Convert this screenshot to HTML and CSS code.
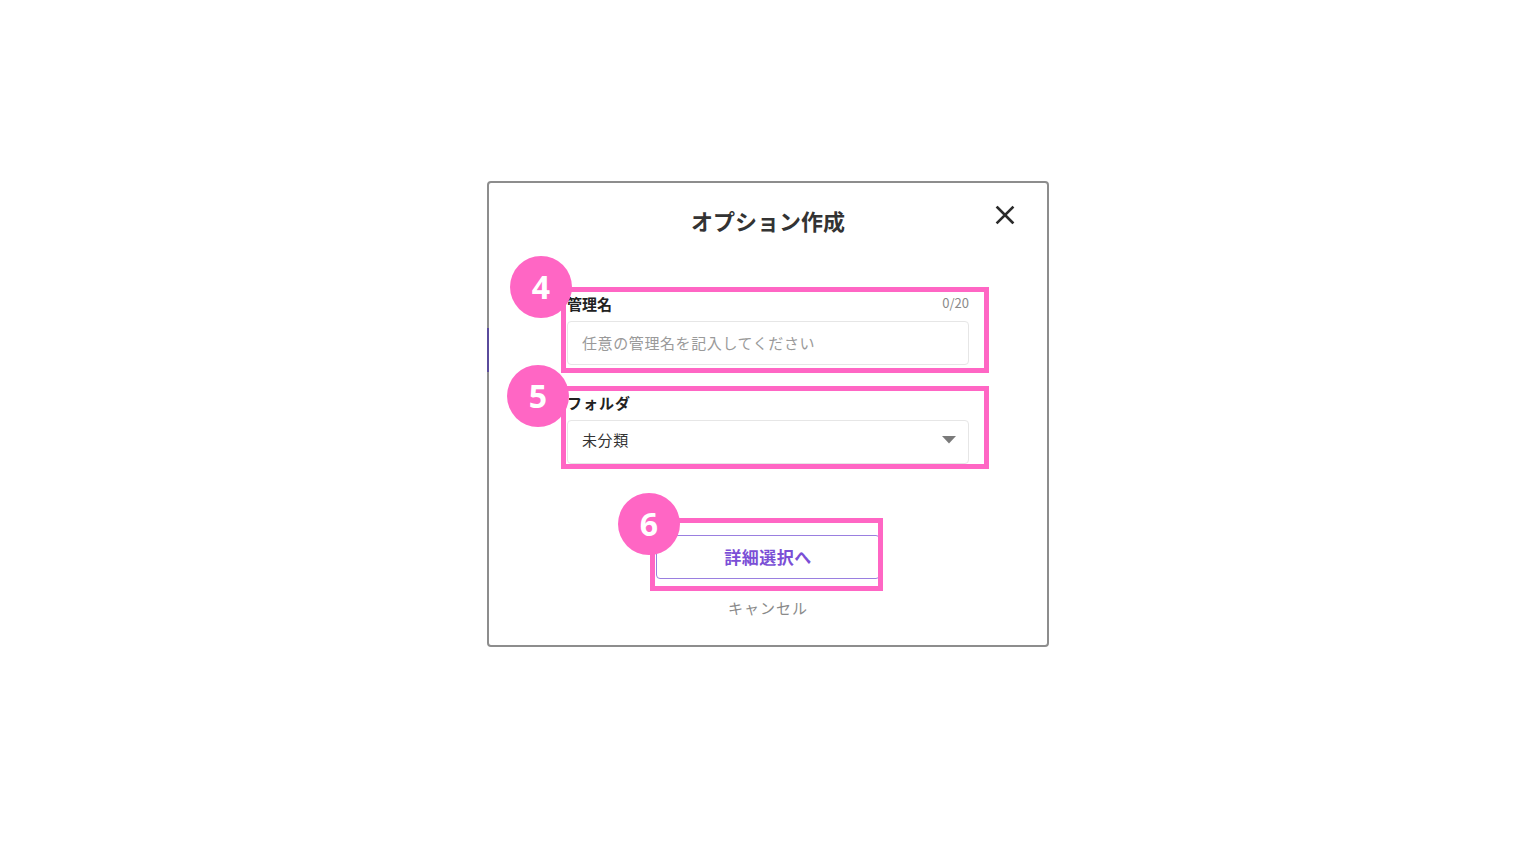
FILE: index.html
```html
<html lang="ja">
<head>
    <meta charset="UTF-8">
    <meta name="viewport" content="width=device-width, initial-scale=1.0">
    <title>オプション作成</title>
    <link rel="stylesheet" href="styles.css">
</head>
<body>
    <div class="page">
        <div class="modal">
            <div class="edge-mark"></div>
            <div class="modal-header">
                <h2>オプション作成</h2>
                <button class="close-btn" aria-label="閉じる">
                    <svg width="20" height="20" viewBox="0 0 20 20">
                        <path d="M2.5 2.5 L17.5 17.5 M17.5 2.5 L2.5 17.5" stroke="#2b2b2b" stroke-width="2.6" stroke-linecap="square" fill="none"/>
                    </svg>
                </button>
            </div>

            <div class="field field-name">
                <div class="field-label">
                    <span>管理名</span>
                    <span class="counter">0/20</span>
                </div>
                <input class="text-input" type="text" placeholder="任意の管理名を記入してください">
            </div>

            <div class="field field-folder">
                <div class="field-label">
                    <span>フォルダ</span>
                </div>
                <div class="select-box">
                    <span>未分類</span>
                    <svg width="14" height="8" viewBox="0 0 14 8">
                        <path d="M0 0 H14 L7 7.5 Z" fill="#7a7a7a"/>
                    </svg>
                </div>
            </div>

            <div class="actions">
                <button class="next-btn">詳細選択へ</button>
                <div class="cancel">キャンセル</div>
            </div>

            <!-- annotation overlay -->
            <div class="mark-box box-1"></div>
            <div class="mark-box box-2"></div>
            <div class="mark-box box-3"></div>
            <div class="mark-num num-4">4</div>
            <div class="mark-num num-5">5</div>
            <div class="mark-num num-6">6</div>
        </div>
    </div>
</body>
</html>
```

FILE: styles.css
```css
body {
    margin: 0;
    padding: 0;
    background: #ffffff;
    font-family: "Noto Sans CJK JP", "Noto Sans", sans-serif;
    color: #333333;
}
.page {
    display: flex;
    justify-content: center;
    padding-top: 181px;
}
.modal {
    position: relative;
    box-sizing: border-box;
    width: 562px;
    height: 466px;
    border: 2px solid #8d8d8d;
    border-radius: 4px;
    background: #ffffff;
    padding: 22px 78px 0 78px;
}
.edge-mark {
    position: absolute;
    left: -2px;
    top: 145px;
    width: 2px;
    height: 44px;
    background: #5a4b9c;
}
.modal-header {
    position: relative;
    display: flex;
    justify-content: center;
}
.modal-header h2 {
    margin: 0;
    font-size: 22px;
    line-height: 30px;
    font-weight: 700;
    color: #333333;
}
.close-btn {
    position: absolute;
    right: -46px;
    top: 0;
    background: none;
    border: none;
    padding: 0;
    width: 20px;
    height: 20px;
    cursor: pointer;
}
.field-name {
    margin-top: 58px;
}
.field-folder {
    margin-top: 27px;
}
.field-label {
    display: flex;
    justify-content: space-between;
    align-items: center;
    height: 20px;
    font-size: 15px;
    font-weight: 700;
    color: #222222;
    margin-bottom: 8px;
}
.field-folder .field-label {
    letter-spacing: 1px;
}
.counter {
    font-size: 13px;
    font-weight: 400;
    color: #8a8a8a;
    margin-top: -2px;
    letter-spacing: 0;
}
.text-input,
.select-box {
    box-sizing: border-box;
    width: 402px;
    height: 44px;
    border: 1px solid #e6e6e6;
    border-radius: 4px;
    padding: 0 14px;
    font-family: "Noto Sans CJK JP", "Noto Sans", sans-serif;
    font-size: 15px;
    color: #333333;
    background: #ffffff;
}
.text-input {
    letter-spacing: 0.6px;
    padding-bottom: 1px;
}
.text-input::placeholder {
    color: #9a9a9a;
}
.select-box {
    display: flex;
    align-items: center;
    justify-content: space-between;
    padding-right: 12px;
    padding-bottom: 5px;
    letter-spacing: 0.6px;
}
.actions {
    display: flex;
    flex-direction: column;
    align-items: center;
    margin-top: 71px;
}
.next-btn {
    box-sizing: border-box;
    width: 224px;
    height: 44px;
    background: #ffffff;
    border: 1px solid #9a7fe0;
    border-radius: 4px;
    color: #7b4fd6;
    font-family: "Noto Sans CJK JP", "Noto Sans", sans-serif;
    font-size: 17px;
    font-weight: 700;
    letter-spacing: 0.5px;
    padding-bottom: 2px;
    cursor: pointer;
}
.cancel {
    margin-top: 19px;
    font-size: 15px;
    line-height: 20px;
    color: #8a8a8a;
    letter-spacing: 1px;
}
.mark-box {
    position: absolute;
    box-sizing: border-box;
    border: 5px solid #ff66c4;
}
.box-1 {
    left: 72px;
    top: 104px;
    width: 428px;
    height: 86px;
}
.box-2 {
    left: 72px;
    top: 203px;
    width: 428px;
    height: 83px;
}
.box-3 {
    left: 161px;
    top: 335px;
    width: 233px;
    height: 73px;
}
.mark-num {
    position: absolute;
    width: 62px;
    height: 62px;
    border-radius: 50%;
    background: #ff66c4;
    color: #ffffff;
    font-family: "Open Sans", "Noto Sans", sans-serif;
    font-size: 32px;
    font-weight: 700;
    line-height: 62px;
    text-align: center;
}
.num-4 {
    left: 21px;
    top: 73px;
}
.num-5 {
    left: 18px;
    top: 182px;
}
.num-6 {
    left: 129px;
    top: 310px;
}
```
